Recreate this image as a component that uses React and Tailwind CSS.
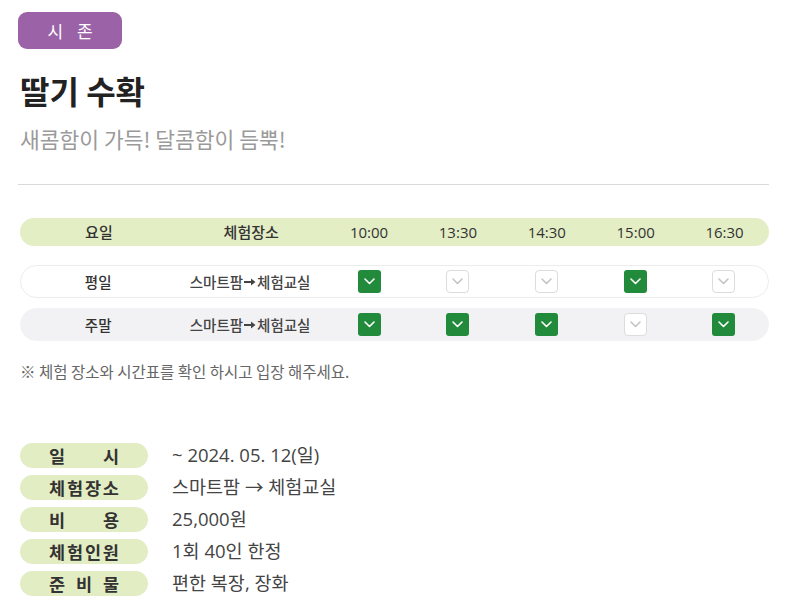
import React from 'react';

const FONT = { fontFamily: '"Noto Sans CJK KR", "Noto Sans", sans-serif' };
const NUM = { fontFamily: '"Open Sans", "Noto Sans CJK KR", sans-serif' };

const times = ['10:00', '13:30', '14:30', '15:00', '16:30'];

const rows = [
  { day: '평일', bg: 'bg-white border border-[#ececec]', checks: [true, false, false, true, false] },
  { day: '주말', bg: 'bg-[#f2f2f4] border border-[#f2f2f4]', checks: [true, true, true, false, true] },
];

const info = [
  { label: ['일', '시'], value: '~ 2024. 05. 12(일)' },
  { label: ['체', '험', '장', '소'], value: '스마트팜 → 체험교실' },
  { label: ['비', '용'], value: '25,000원' },
  { label: ['체', '험', '인', '원'], value: '1회 40인 한정' },
  { label: ['준', '비', '물'], value: '편한 복장, 장화' },
];

const Chevron = ({ color }) => (
  <svg width="11" height="7" viewBox="0 0 11 7" fill="none">
    <path d="M1 1l4.5 4.5L10 1" stroke={color} strokeWidth="1.6" strokeLinecap="round" strokeLinejoin="round" />
  </svg>
);

const Check = ({ on }) =>
  on ? (
    <div className="w-[23px] h-[23px] rounded-[3px] bg-[#218a3b] flex items-center justify-center">
      <Chevron color="#ffffff" />
    </div>
  ) : (
    <div className="w-[23px] h-[23px] rounded-[4px] bg-white border border-[#dcdcdc] flex items-center justify-center">
      <Chevron color="#c4c4c4" />
    </div>
  );

const Arrow = () => (
  <svg width="12" height="8" viewBox="0 0 12 8" className="mx-[1px]">
    <path d="M0 3h7V0.5L11.5 4 7 7.5V5H0z" fill="#444" />
  </svg>
);

export default function App() {
  return (
    <div className="w-[800px] h-[610px] bg-white pl-5 pr-[31px] pt-3 overflow-hidden" style={FONT}>
      <div className="-ml-0.5 w-[104px] h-[37px] rounded-[9px] bg-[#9c62a7] flex items-center justify-center text-white text-[17px] tracking-[5px] pl-[5px]">
        시 존
      </div>

      <h1 className="mt-[22px] text-[32px] leading-[38px] font-bold text-[#222]">딸기 수확</h1>
      <p className="mt-[15px] text-[21.5px] leading-[30px] text-[#9a9a9a]">새콤함이 가득! 달콤함이 듬뿍!</p>

      <div className="mt-[30px] -ml-0.5 border-t border-[#d9d9d9]" />

      <div className="mt-[33px] h-[28px] rounded-full bg-[#e3eec5] flex items-center text-[#333]">
        <div className="w-[158px] text-center text-[15px] font-medium">요일</div>
        <div className="w-[147px] text-center text-[15px] font-medium">체험장소</div>
        {times.map((t) => (
          <div key={t} className="w-[89px] text-center text-[15px]" style={NUM}>
            {t}
          </div>
        ))}
      </div>

      <div className="mt-[19px] flex flex-col gap-[10px]">
        {rows.map((r) => (
          <div key={r.day} className={`h-[33px] rounded-full flex items-center text-[14.5px] font-medium text-[#333] ${r.bg}`}>
            <div className="w-[155px] text-center">{r.day}</div>
            <div className="w-[150px] flex items-center justify-center text-[#444]">
              스마트팜<Arrow />체험교실
            </div>
            {r.checks.map((c, i) => (
              <div key={i} className="w-[89px] flex justify-center">
                <Check on={c} />
              </div>
            ))}
          </div>
        ))}
      </div>

      <p className="mt-[20px] text-[15.5px] leading-[20px] text-[#666]">※ 체험 장소와 시간표를 확인 하시고 입장 해주세요.</p>

      <div className="mt-[62px] flex flex-col gap-[7px]">
        {info.map((it) => (
          <div key={it.value} className="flex items-center">
            <div className="w-[128px] h-[25px] rounded-full bg-[#e3edc4] flex items-center justify-center">
              <div className="w-[70px] flex justify-between text-[17.5px] leading-none font-bold text-[#333]">
                {it.label.map((ch, i) => (
                  <span key={i}>{ch}</span>
                ))}
              </div>
            </div>
            <div className="ml-[24px] text-[18.5px] leading-none text-[#444]" style={NUM}>{it.value}</div>
          </div>
        ))}
      </div>
    </div>
  );
}
